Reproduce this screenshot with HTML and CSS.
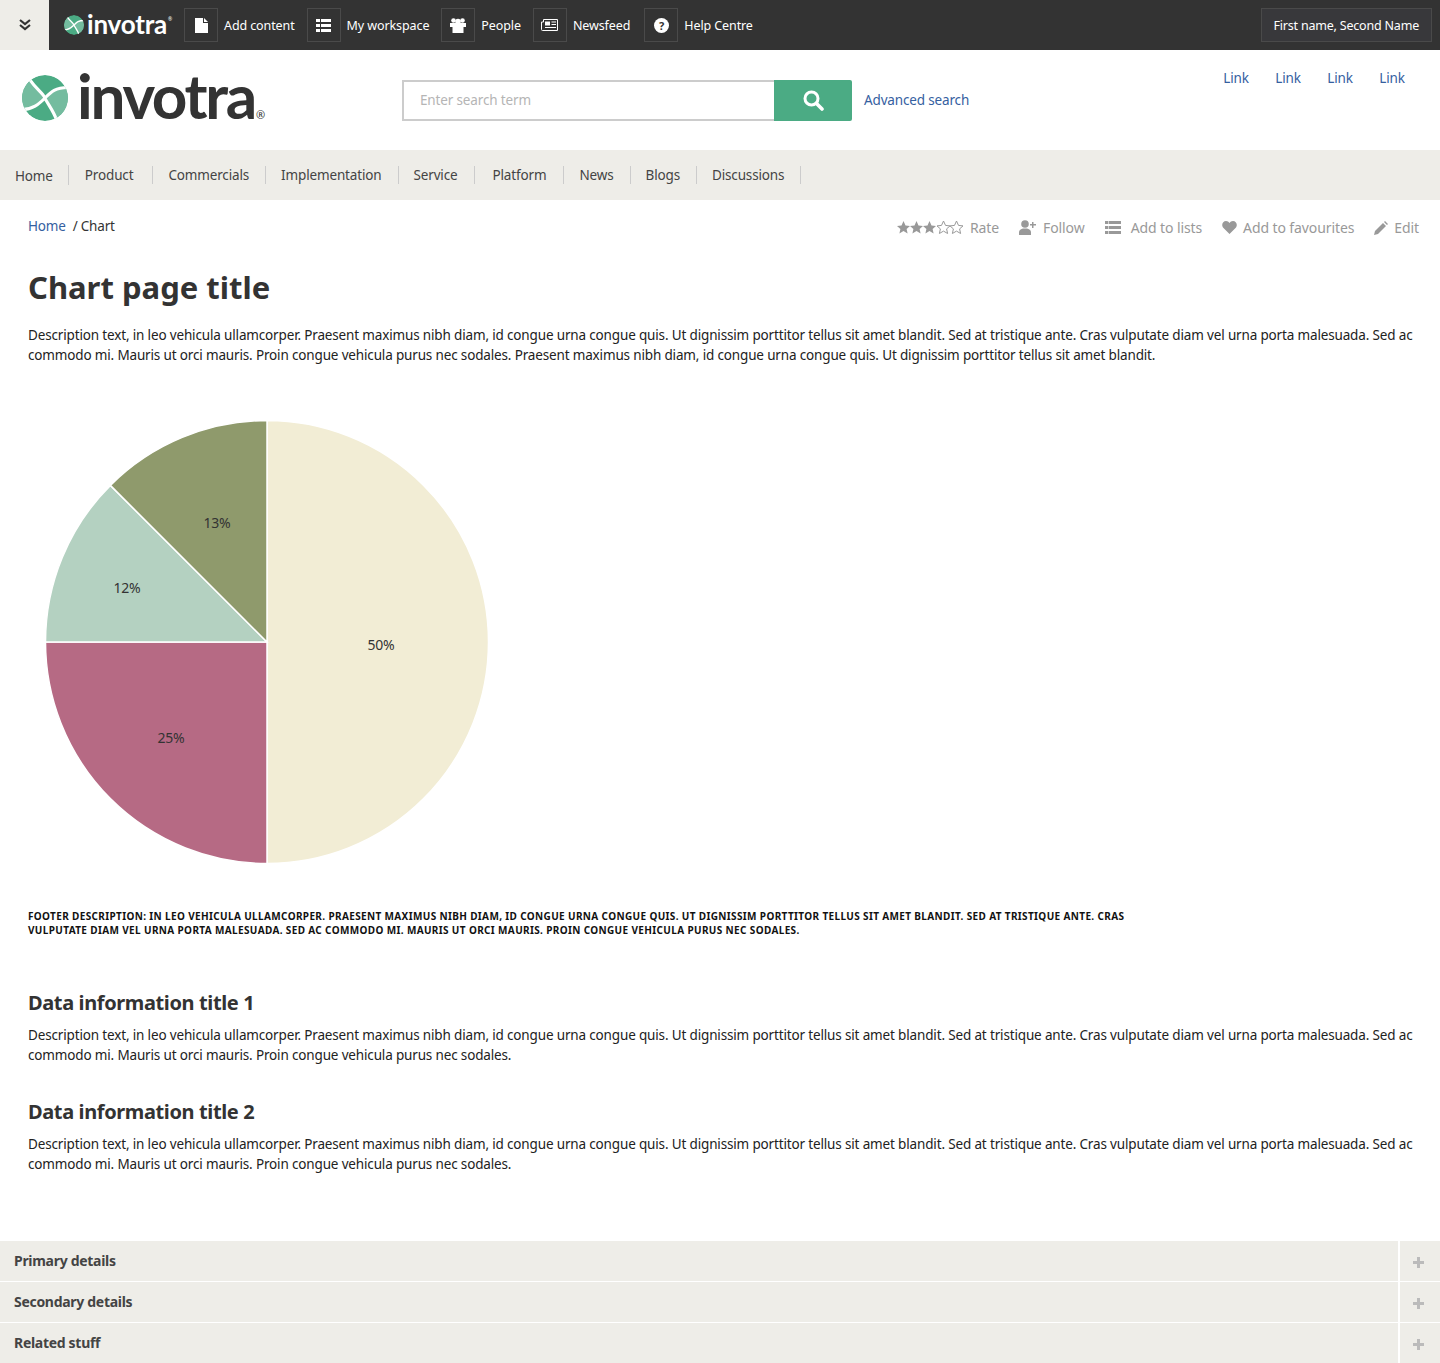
FILE: index.html
```html
<!DOCTYPE html>
<html lang="en">
<head>
    <meta charset="UTF-8">
    <title>Chart page title</title>
    <link rel="stylesheet" href="styles.css">
</head>
<body>

    <!-- Admin bar -->
    <div class="admin-bar">
        <div class="toggle">
            <svg width="14" height="14" viewBox="0 0 14 14"><path d="M2 2l5 4 5-4M2 7l5 4 5-4" fill="none" stroke="#333" stroke-width="2.2"/></svg>
        </div>
        <div class="admin-logo">
            <svg class="mark" width="20" height="20" viewBox="0 0 44 44"><use href="#logo-mark"/></svg>
            <span class="admin-logo-text">invotra</span><span class="reg-small">®</span>
        </div>
        <a class="admin-item"><span class="admin-icon"><svg width="13" height="15" viewBox="0 0 13 15"><path d="M0 0h8v5h5v10H0zM9 0l4 4H9z" fill="#fff"/></svg></span>Add content</a>
        <a class="admin-item"><span class="admin-icon"><svg width="15" height="13" viewBox="0 0 15 13"><path d="M0 0h4v3H0zM5 0h10v3H5zM0 5h4v3H0zM5 5h10v3H5zM0 10h4v3H0zM5 10h10v3H5z" fill="#fff"/></svg></span>My workspace</a>
        <a class="admin-item"><span class="admin-icon"><svg width="16" height="15" viewBox="0 0 16 15"><circle cx="3.500" cy="2.500" r="2.300" fill="#fff"/><circle cx="12.500" cy="2.500" r="2.300" fill="#fff"/><circle cx="8" cy="3.500" r="2.800" fill="#fff"/><path d="M0 5h16v4h-2.500v6h-11V9H0z" fill="#fff"/></svg></span>People</a>
        <a class="admin-item admin-item-wide"><span class="admin-icon"><svg width="17" height="12" viewBox="0 0 17 12"><path d="M2.500.5h14v11H1.500q-1 0-1-1V3h2z" fill="none" stroke="#fff"/><path d="M4 2.500h5v4H4zM10.500 2.500h4.500v1h-4.500zM10.500 5h4.500v1h-4.500zM4 8h11v1H4z" fill="#fff"/></svg></span>Newsfeed</a>
        <a class="admin-item"><span class="admin-icon"><svg width="15" height="15" viewBox="0 0 15 15"><circle cx="7.500" cy="7.500" r="7.500" fill="#fff"/><text x="7.500" y="11.500" text-anchor="middle" class="help-mark">?</text></svg></span>Help Centre</a>
        <a class="user-box">First name, Second Name</a>
    </div>

    <!-- Header -->
    <div class="site-header">
        <div class="site-logo">
            <svg class="site-mark" width="46" height="46" viewBox="0 0 44 44">
                <defs>
                    <clipPath id="logo-clip"><circle cx="22" cy="22" r="22"/></clipPath>
                    <g id="logo-mark" clip-path="url(#logo-clip)">
                        <circle cx="22" cy="22" r="22" fill="#4bab84"/>
                        <path d="M7 5C14 14 20 17 22 22 16 28 10 33 0 33L-5 20z" fill="#74bc9f"/>
                        <path d="M44 12C32 12 28 18 22 22 26 28 30 34 33 42L50 30z" fill="#74bc9f"/>
                        <path d="M7 4C14 14 20 17 22 22S30 34 33 43M0 33C10 33 16 28 22 22S32 12 44 12" fill="none" stroke="#fff" stroke-width="3"/>
                    </g>
                </defs>
                <use href="#logo-mark"/>
            </svg>
            <span class="site-logo-text">invotra</span><span class="reg">®</span>
        </div>
        <form class="search">
            <div class="search-input">Enter search term</div>
            <button class="search-btn" type="button">
                <svg width="22" height="22" viewBox="0 0 22 22"><circle cx="9.500" cy="9.500" r="6.500" fill="none" stroke="#fff" stroke-width="3"/><path d="M14.500 14.500l5.500 5.500" stroke="#fff" stroke-width="3.600" stroke-linecap="round"/></svg>
            </button>
            <a class="advanced" href="#">Advanced search</a>
        </form>
        <div class="top-links">
            <a href="#">Link</a>
            <a href="#">Link</a>
            <a href="#">Link</a>
            <a href="#">Link</a>
        </div>
    </div>

    <!-- Main menu -->
    <nav class="main-menu">
        <a class="first">Home</a>
        <a class="menu-product">Product</a>
        <a>Commercials</a>
        <a>Implementation</a>
        <a>Service</a>
        <a class="menu-wide">Platform</a>
        <a>News</a>
        <a>Blogs</a>
        <a>Discussions</a>
    </nav>

    <div class="content">
        <div class="crumb-row">
            <div class="crumbs"><a href="#">Home</a><span class="sep">/</span>Chart</div>
            <div class="actions">
                <span class="action">
                    <svg width="66" height="13" viewBox="0 0 66 13">
                        <defs><path id="star" d="M6.500 0l2 4.400 4.500.5-3.400 3 1 4.600-4.100-2.400-4.100 2.400 1-4.600L0 4.900l4.500-.5z"/></defs>
                        <use href="#star" fill="#999"/><use href="#star" x="13" fill="#999"/><use href="#star" x="26" fill="#999"/>
                        <use href="#star" x="40" fill="none" stroke="#999"/><use href="#star" x="53" fill="none" stroke="#999"/>
                    </svg>Rate</span>
                <span class="action">
                    <svg width="17" height="15" viewBox="0 0 17 15"><circle cx="6" cy="4" r="3.800" fill="#999"/><path d="M0 15v-3c0-2 2-3 4-3.500h4c2 .5 4 1.500 4 3.500v3zM11 4h2V2h1.500v2H17v1.500h-2.500V8H13V5.500h-2z" fill="#999"/></svg>Follow</span>
                <span class="action action-wide">
                    <svg width="16" height="13" viewBox="0 0 16 13"><path d="M0 0h16v3H0zM0 5h16v3H0zM0 10h16v3H0z" fill="#999"/><path d="M3.500 0v13" stroke="#fff" stroke-width=".6"/></svg>Add to lists</span>
                <span class="action action-tight">
                    <svg width="15" height="13" viewBox="0 0 15 13"><path d="M7.500 13L1 6.500C-1 3.500 1 0 4 0c1.500 0 2.700.8 3.500 2C8.300.8 9.500 0 11 0c3 0 5 3.500 3 6.500z" fill="#999"/></svg>Add to favourites</span>
                <span class="action action-tight">
                    <svg width="14" height="14" viewBox="0 0 14 14"><path d="M0 14l1-4 8-8 3 3-8 8zM10 1l1-1 3 3-1 1z" fill="#999"/></svg>Edit</span>
            </div>
        </div>

        <h1>Chart page title</h1>
        <p class="text">Description text, in leo vehicula ullamcorper. Praesent maximus nibh diam, id congue urna congue quis. Ut dignissim porttitor tellus sit amet blandit. Sed at tristique ante. Cras vulputate diam vel urna porta malesuada. Sed ac commodo mi. Mauris ut orci mauris. Proin congue vehicula purus nec sodales. Praesent maximus nibh diam, id congue urna congue quis. Ut dignissim porttitor tellus sit amet blandit.</p>

        <div class="chart">
            <svg width="444" height="444" viewBox="-222 -222 444 444">
                <path d="M0 0V-221.500A221.500 221.500 0 0 1 0 221.500z" fill="#f2edd5" stroke="#fff" stroke-width="1.500"/>
                <path d="M0 0V221.500A221.500 221.500 0 0 1 -221.500 0z" fill="#b66a84" stroke="#fff" stroke-width="1.500"/>
                <path d="M0 0H-221.500A221.500 221.500 0 0 1 -156.600 -156.600z" fill="#b4d1c1" stroke="#fff" stroke-width="1.500"/>
                <path d="M0 0L-156.600 -156.600A221.500 221.500 0 0 1 0 -221.500z" fill="#8f9a6c" stroke="#fff" stroke-width="1.500"/>
                <text x="114" y="8" class="pie-label">50%</text>
                <text x="-96" y="101" class="pie-label">25%</text>
                <text x="-140" y="-49" class="pie-label">12%</text>
                <text x="-50" y="-114" class="pie-label">13%</text>
            </svg>
        </div>
        <p class="chart-footer">Footer description: in leo vehicula ullamcorper. Praesent maximus nibh diam, id congue urna congue quis. Ut dignissim porttitor tellus sit amet blandit. Sed at tristique ante. Cras vulputate diam vel urna porta malesuada. Sed ac commodo mi. Mauris ut orci mauris. Proin congue vehicula purus nec sodales.</p>

        <h2 class="first-title">Data information title 1</h2>
        <p class="text">Description text, in leo vehicula ullamcorper. Praesent maximus nibh diam, id congue urna congue quis. Ut dignissim porttitor tellus sit amet blandit. Sed at tristique ante. Cras vulputate diam vel urna porta malesuada. Sed ac commodo mi. Mauris ut orci mauris. Proin congue vehicula purus nec sodales.</p>

        <h2>Data information title 2</h2>
        <p class="text">Description text, in leo vehicula ullamcorper. Praesent maximus nibh diam, id congue urna congue quis. Ut dignissim porttitor tellus sit amet blandit. Sed at tristique ante. Cras vulputate diam vel urna porta malesuada. Sed ac commodo mi. Mauris ut orci mauris. Proin congue vehicula purus nec sodales.</p>
    </div>

    <!-- Accordion -->
    <div class="details">
        <div class="detail-row"><span class="detail-title">Primary details</span><span class="detail-plus"></span></div>
        <div class="detail-row"><span class="detail-title">Secondary details</span><span class="detail-plus"></span></div>
        <div class="detail-row"><span class="detail-title">Related stuff</span><span class="detail-plus"></span></div>
    </div>

</body>
</html>
```

FILE: styles.css
```css
body {
    margin: 0;
    font-family: "Noto Sans", "Open Sans", sans-serif;
    font-size: 13.5px;
    letter-spacing: -0.15px;
    color: #333;
    background: #fff;
}

a {
    color: #35609f;
    text-decoration: none;
}

/* Admin bar */
.admin-bar {
    display: flex;
    align-items: center;
    height: 50px;
    background: #333;
    color: #fff;
    font-size: 12.5px;
    letter-spacing: -0.1px;
}

.toggle {
    display: flex;
    align-items: center;
    justify-content: center;
    width: 49px;
    height: 50px;
    background: #eeede8;
}

.admin-logo {
    display: flex;
    align-items: center;
    width: 135px;
    padding-left: 15px;
    box-sizing: border-box;
}

.admin-logo-text {
    margin: -3px 0 0 3px;
    font-family: "Lato", sans-serif;
    font-weight: 700;
    font-size: 26px;
    line-height: 26px;
    letter-spacing: -0.2px;
    color: #fff;
}

.reg-small {
    font-size: 5px;
    align-self: flex-end;
    margin: 0 0 15px 1px;
}

.admin-item {
    display: flex;
    align-items: center;
    color: #fff;
    margin-right: 12px;
}

.admin-item-wide {
    margin-right: 14px;
}

.admin-icon {
    display: flex;
    align-items: center;
    justify-content: center;
    width: 32px;
    height: 32px;
    border: 1px solid #4a4a4a;
    margin-right: 6px;
}

.help-mark {
    font-size: 11px;
    font-weight: 700;
    fill: #333;
}

.user-box {
    margin-left: auto;
    margin-right: 8px;
    padding: 0 12px;
    height: 32px;
    line-height: 33px;
    letter-spacing: -0.2px;
    border: 1px solid #4a4a4a;
    background: #38383b;
    color: #fff;
}

/* Header */
.site-header {
    display: flex;
    height: 100px;
    position: relative;
}

.site-logo {
    display: flex;
    align-items: center;
    width: 402px;
    padding-left: 22px;
    box-sizing: border-box;
}

.site-mark {
    margin-top: -4px;
}

.site-logo-text {
    margin: -10px 0 0 9px;
    font-family: "Lato", sans-serif;
    font-weight: 700;
    font-size: 62px;
    line-height: 62px;
    letter-spacing: -2.3px;
    color: #333;
}

.reg {
    font-size: 11px;
    letter-spacing: 0;
    align-self: flex-end;
    margin: 0 0 28px 1px;
}

.search {
    display: flex;
    align-items: center;
    margin: 0;
}

.search-input {
    width: 354px;
    height: 37px;
    line-height: 37px;
    padding-left: 16px;
    border: 2px solid #ccc;
    border-right: 0;
    color: #b5b5b5;
}

.search-btn {
    display: flex;
    align-items: center;
    justify-content: center;
    width: 78px;
    height: 41px;
    padding: 0;
    border: 0;
    border-radius: 0 2px 2px 0;
    background: #4bab84;
}

.advanced {
    margin-left: 12px;
}

.top-links {
    display: flex;
    gap: 26px;
    margin-left: auto;
    margin-right: 35px;
    padding-top: 19px;
}

.top-links a {
    width: 26px;
    text-align: center;
}

/* Main menu */
.main-menu {
    display: flex;
    align-items: center;
    height: 50px;
    background: #eeede8;
}

.main-menu a {
    color: #444;
    height: 18px;
    line-height: 18px;
    padding: 0 16px 0 15px;
    border-right: 1px solid #ccc;
}

.main-menu a.first {
    padding: 2px 15px 0;
}

.main-menu a.menu-product {
    padding: 0 19px 0 16px;
}

.main-menu a.menu-wide {
    padding: 0 17px 0 18px;
}

/* Content */
.content {
    padding: 0 21px 0 28px;
}

.crumb-row {
    display: flex;
    justify-content: space-between;
    padding-top: 17px;
    height: 20px;
}

.sep {
    margin: 0 3px 0 7px;
}

.actions {
    display: flex;
    gap: 20px;
    padding-top: 1px;
    font-size: 14px;
    letter-spacing: -0.1px;
    color: #999;
}

.action {
    display: flex;
    align-items: center;
    gap: 7px;
}

.action-wide {
    gap: 10px;
}

.action-tight {
    gap: 6px;
}

h1 {
    margin: 32px 0 0;
    font-size: 31px;
    line-height: 36px;
    font-weight: 700;
    letter-spacing: 0;
    color: #333;
}

.text {
    margin: 20px 0 0;
    line-height: 20px;
    letter-spacing: -0.155px;
    color: #222;
}

.chart {
    margin: 55px 0 0 17px;
    line-height: 0;
}

.pie-label {
    font-size: 14px;
    fill: #333;
    text-anchor: middle;
}

.chart-footer {
    margin: 45px 0 0;
    width: 1110px;
    font-size: 10px;
    line-height: 14px;
    font-weight: 700;
    letter-spacing: 0.36px;
    text-transform: uppercase;
    color: #111;
}

h2 {
    margin: 33px 0 0;
    font-size: 20px;
    line-height: 28px;
    font-weight: 700;
    letter-spacing: -0.38px;
    color: #333;
}

h2 + .text {
    margin-top: 8px;
}

h2.first-title {
    margin-top: 52px;
}

/* Accordion */
.details {
    margin-top: 67px;
}

.detail-row {
    display: flex;
    height: 40px;
    margin-bottom: 1px;
    background: #eeede8;
}

.detail-title {
    flex: 1;
    padding-left: 14px;
    line-height: 40px;
    font-size: 14px;
    font-weight: 700;
    letter-spacing: -0.3px;
    color: #444;
}

.detail-plus {
    position: relative;
    width: 40px;
    border-left: 2px solid #fff;
}

.detail-plus::before {
    content: "";
    position: absolute;
    left: 13px;
    top: 20px;
    width: 11px;
    height: 3px;
    background: #bbb;
}

.detail-plus::after {
    content: "";
    position: absolute;
    left: 17px;
    top: 16px;
    width: 3px;
    height: 11px;
    background: #bbb;
}
```
